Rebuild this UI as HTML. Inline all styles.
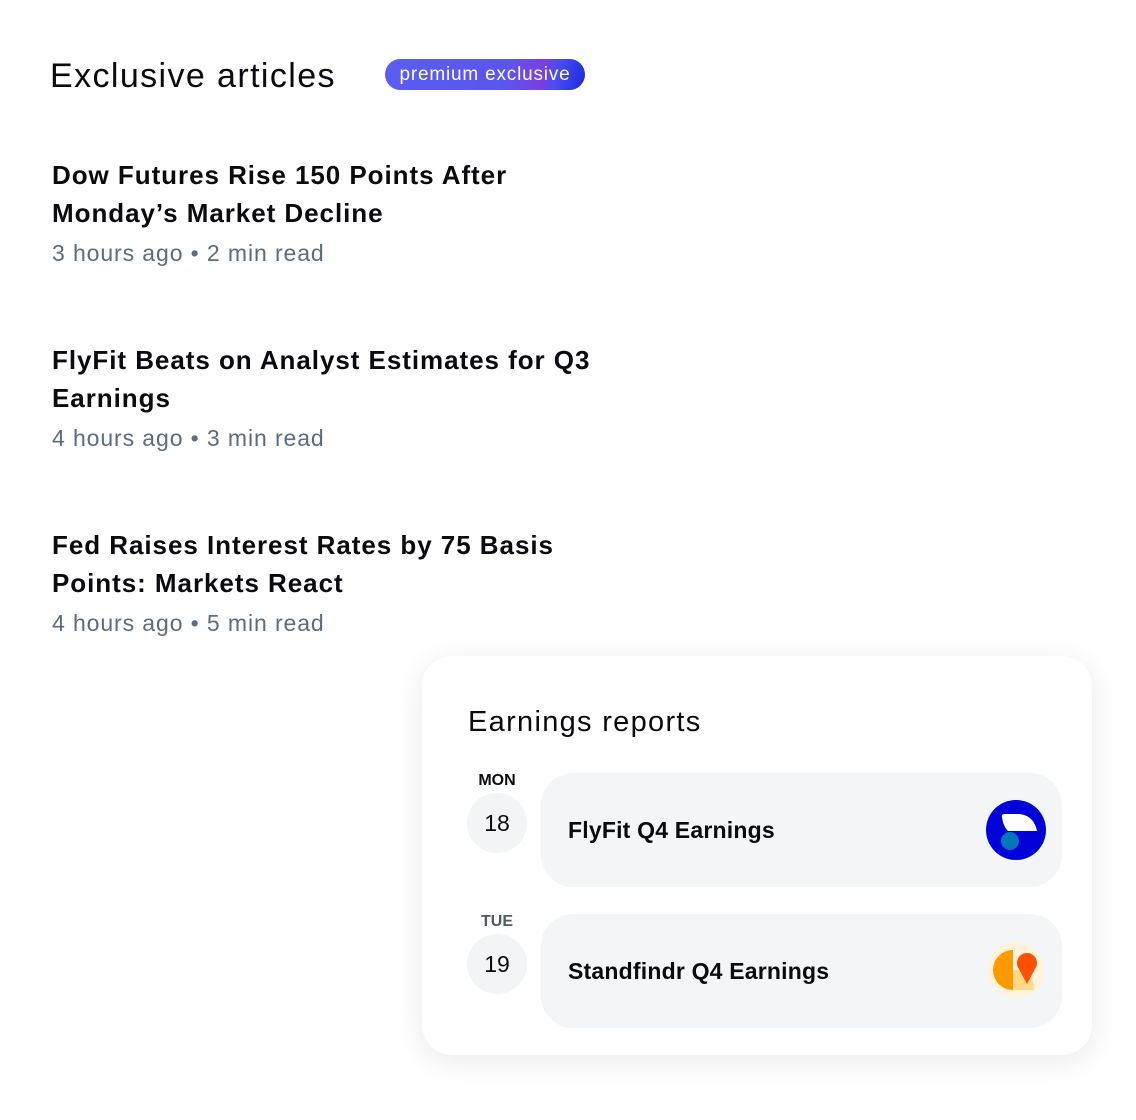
<!DOCTYPE html>
<html><head><style>
*{margin:0;padding:0;box-sizing:border-box}
body{width:1136px;height:1120px;background:#fff;font-family:"Liberation Sans",sans-serif;position:relative;overflow:hidden;color:#0b0b0f}
.abs{position:absolute}
h1{position:absolute;left:50px;top:57px;font-size:34px;font-weight:400;letter-spacing:1.4px}
.badge{position:absolute;left:385px;top:59px;width:200px;height:31px;border-radius:16px;background:linear-gradient(100deg,#5a5df2 0%,#5b55f0 60%,#7a3fe0 78%,#4a4cf0 85%,#1d2be0 100%);color:#fff;font-size:19px;text-align:center;line-height:31px;letter-spacing:0.8px}
.art{position:absolute;left:52px;width:620px}
.art .t{font-size:26px;font-weight:700;line-height:38px;letter-spacing:0.95px}
.art .m{font-size:23px;color:#5d6b80;margin-top:6px;line-height:30px;letter-spacing:0.9px}
.card{position:absolute;left:422px;top:656px;width:670px;height:399px;border-radius:30px;background:#fff;box-shadow:0 6px 30px rgba(0,0,0,0.09)}
.card h2{position:absolute;left:46px;top:50px;font-size:29px;font-weight:400;letter-spacing:1.3px}
.day{position:absolute;left:45px;width:60px;text-align:center;font-size:16px;font-weight:700}
.num{position:absolute;left:45px;width:60px;height:60px;border-radius:50%;background:#f3f4f6;font-size:23px;text-align:center;line-height:60px}
.row{position:absolute;left:119px;width:521px;height:114px;border-radius:32px;background:#f4f5f7;font-size:23px;font-weight:700;line-height:114px;padding-left:27px;letter-spacing:0.2px}
</style></head><body>
<h1>Exclusive articles</h1>
<div class="badge">premium exclusive</div>
<div class="art" style="top:156px"><div class="t">Dow Futures Rise 150 Points After<br>Monday’s Market Decline</div><div class="m">3 hours ago • 2 min read</div></div>
<div class="art" style="top:341px"><div class="t">FlyFit Beats on Analyst Estimates for Q3<br>Earnings</div><div class="m">4 hours ago • 3 min read</div></div>
<div class="art" style="top:526px"><div class="t">Fed Raises Interest Rates by 75 Basis<br>Points: Markets React</div><div class="m">4 hours ago • 5 min read</div></div>
<div class="card">
<h2>Earnings reports</h2>
<div class="day" style="top:116px">MON</div>
<div class="num" style="top:137px">18</div>
<div class="row" style="top:117px">FlyFit Q4 Earnings</div>
<div class="day" style="top:257px;color:#4d5a6e">TUE</div>
<div class="num" style="top:278px">19</div>
<div class="row" style="top:258px">Standfindr Q4 Earnings</div>
<svg class="abs" style="left:564px;top:144px" width="60" height="60" viewBox="0 0 60 60">
<circle cx="30" cy="30" r="30" fill="#0000d8"/>
<path d="M16 17 Q15 14 19 14 L34 14 Q48 16 51 31 L22 31 Q17 26 16 17Z" fill="#fff"/>
<circle cx="24" cy="41" r="9" fill="#0077b6"/>
</svg>
<svg class="abs" style="left:564px;top:286px" width="60" height="60" viewBox="0 0 60 60">
<circle cx="30" cy="28" r="28" fill="#fff3dc"/>
<path d="M27 8 A20 20 0 0 0 27 48Z" fill="#ff9900"/>
<path d="M27 28 L40 28 Q48 36 48 48 L27 48Z" fill="#ffd98a"/>
<path d="M41 42 L33 27 A10 10 0 1 1 49 27Z" fill="#ff5000"/>
</svg>
</div>
</body></html>
